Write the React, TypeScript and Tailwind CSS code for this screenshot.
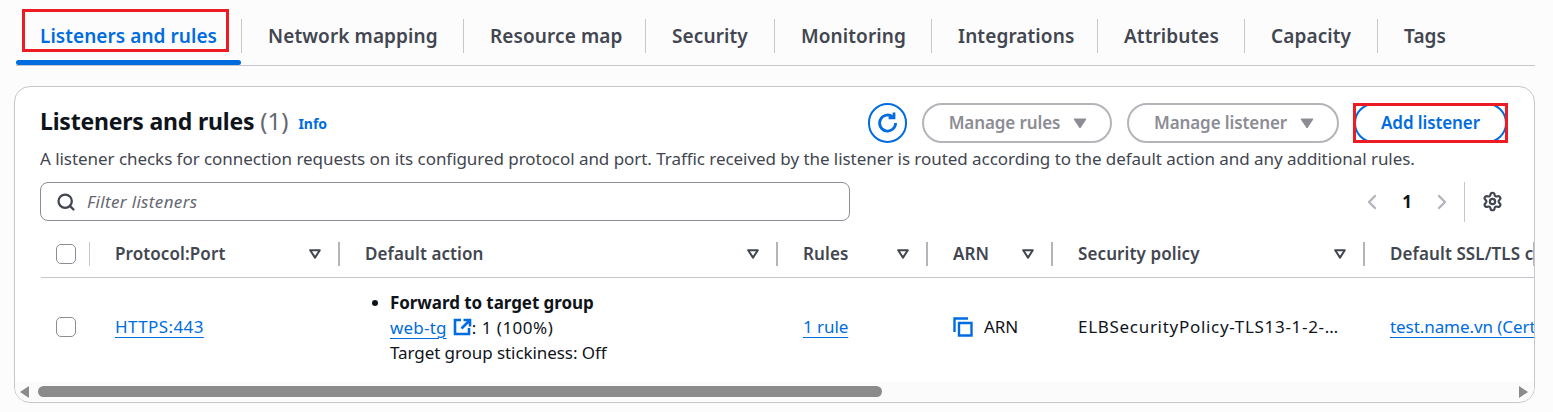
import React from "react";
import { ChevronLeft, ChevronRight, Search, Settings } from "lucide-react";

const tabs = ["Network mapping", "Resource map", "Security", "Monitoring", "Integrations", "Attributes", "Capacity", "Tags"];
const tabWidths = ["w-[223px]", "w-[182px]", "w-[129px]", "w-[157px]", "w-[166px]", "w-[147px]", "w-[133px]", "w-[96px]"];

const FilterCaret = () => (
  <svg width="12" height="10" viewBox="0 0 12 10" className="shrink-0">
    <path d="M1.2 1.2h9.6L6 8.6z" fill="none" stroke="#424650" strokeWidth="2" strokeLinejoin="round" />
  </svg>
);

const SolidCaret = ({ color }: { color: string }) => (
  <svg width="14" height="11" viewBox="0 0 14 11" className="shrink-0">
    <path d="M1 1h12L7 10z" fill={color} stroke={color} strokeLinejoin="round" />
  </svg>
);

const Checkbox = () => <div className="w-5 h-5 shrink-0 rounded-[5px] border border-[#8c8c94] bg-white" />;

const HeaderCell = ({ label, width, last }: { label: string; width: string; last?: boolean }) => (
  <div className={`${width} shrink-0 h-6 flex items-center justify-between pl-[25px] border-r-2 border-[#b4b4bb] ${last ? "border-r-0" : ""}`}>
    <span className="text-[17px] font-semibold tracking-[0.1px] whitespace-nowrap text-[#424650]">{label}</span>
    {!last && <span className="pr-[17px] flex"><FilterCaret /></span>}
  </div>
);

const App = () => {
  return (
    <div className="relative w-[1553px] h-[412px] overflow-hidden bg-[#fcfcfc] pt-[15px] font-['Noto_Sans','Open_Sans',sans-serif] text-[#0f141a]">
      {/* Tabs */}
      <div className="ml-4 w-[1519px] h-[51px] flex border-b border-[#c6c6cd]">
        <div className="relative w-[225px] h-[50px] pt-2 shrink-0">
          <div className="h-[26px] pl-6 text-[19px] leading-[26px] tracking-[0.05px] font-semibold text-[#006ce0] whitespace-nowrap">Listeners and rules</div>
          <div className="absolute left-0 bottom-0 w-[225px] h-[5px] rounded-[3px] bg-[#006ce0]" />
          <div className="absolute left-[6px] top-[-6px] w-[207px] h-[43px] border-[3px] border-[#ed1c24]" />
        </div>
        {tabs.map((t, i) => (
          <div key={t} className={`${tabWidths[i]} h-[34px] mt-[4px] pl-[26px] shrink-0 flex items-center text-[19px] tracking-[0.1px] font-semibold text-[#424650] whitespace-nowrap ${i === 0 ? "border-l border-[#c6c6cd]" : ""} ${i < tabs.length - 1 ? "border-r border-[#c6c6cd]" : ""}`}>
            {t}
          </div>
        ))}
      </div>

      {/* Card */}
      <div className="relative ml-[14px] mt-5 w-[1521px] h-[317px] rounded-2xl border border-[#c6c6cd] bg-white overflow-hidden">
        <div className="pl-[25px] pr-[26px] pt-4">
          <div className="flex items-center h-10">
            <span className="-mt-1 text-[23px] font-bold tracking-[-0.2px] whitespace-nowrap">Listeners and rules</span>
            <span className="-mt-1 ml-[6px] text-[24px] text-[#656871]">(1)</span>
            <span className="ml-[10px] text-[14px] tracking-[-0.05px] font-bold text-[#006ce0]">Info</span>
            <div className="ml-auto mr-px flex items-center gap-[15px]">
              <div className="w-[39px] h-10 rounded-full border-2 border-[#006ce0] flex items-center justify-center">
                <svg width="26" height="26" viewBox="0 0 26 26" fill="none" stroke="#006ce0" strokeWidth="2.8">
                  <path d="M20.6 13a8 8 0 1 1-3-6.2" />
                  <path d="M19 2.4v5.4h-5.4" />
                </svg>
              </div>
              <div className="w-[190px] h-10 pl-[2px] rounded-[20px] border-2 border-[#b4b4bb] flex items-center justify-center gap-[13px] text-[17px] tracking-[-0.1px] font-semibold text-[#8c8c94]">
                Manage rules <SolidCaret color="#8c8c94" />
              </div>
              <div className="w-[212px] h-10 pl-[2px] rounded-[20px] border-2 border-[#b4b4bb] flex items-center justify-center gap-[13px] text-[17px] tracking-[-0.1px] font-semibold text-[#8c8c94]">
                Manage listener <SolidCaret color="#8c8c94" />
              </div>
              <div className="relative w-[153px] h-10 rounded-[20px] border-2 border-[#006ce0] flex items-center justify-center text-[17px] tracking-[-0.1px] font-semibold text-[#006ce0]">
                Add listener
                <div className="absolute -left-[3px] -top-[2px] w-[155px] h-[40px] border-[3px] border-[#ed1c24]" />
              </div>
            </div>
          </div>
          <p className="mt-[5px] h-[22px] text-[17px] leading-[22px] tracking-[-0.05px] whitespace-nowrap text-[#424650]">
            A listener checks for connection requests on its configured protocol and port. Traffic received by the listener is routed according to the default action and any additional rules.
          </p>
          <div className="mt-[12px] flex items-center h-[39px]">
            <div className="w-[810px] h-[39px] rounded-lg border border-[#8c8c94] flex items-center pl-[15px] gap-[11px] bg-white">
              <Search size={20} strokeWidth={2.7} className="text-[#424650]" />
              <span className="text-[17px] italic tracking-[0.35px] text-[#656871]">Filter listeners</span>
            </div>
            <div className="ml-auto flex items-center">
              <ChevronLeft size={24} strokeWidth={2.4} className="text-[#b4b4bb]" />
              <span className="w-[46px] text-center text-[17px] font-bold">1</span>
              <ChevronRight size={24} strokeWidth={2.4} className="text-[#b4b4bb]" />
              <div className="ml-[10px] h-10 border-l border-[#c6c6cd]" />
              <Settings size={21} strokeWidth={2.5} className="ml-[17px] mr-[5px] text-[#424650]" />
            </div>
          </div>
        </div>

        {/* Table */}
        <div className="mt-[10px] ml-[26px] h-[47px] flex items-center border-b border-[#c6c6cd] w-[1494px] overflow-hidden">
          <div className="w-[49px] pl-[15px] shrink-0 h-6 flex items-center border-r border-[#c6c6cd]">
            <Checkbox />
          </div>
          <HeaderCell label="Protocol:Port" width="w-[250px]" />
          <HeaderCell label="Default action" width="w-[438px]" />
          <HeaderCell label="Rules" width="w-[150px]" />
          <HeaderCell label="ARN" width="w-[125px]" />
          <HeaderCell label="Security policy" width="w-[312px]" />
          <HeaderCell label="Default SSL/TLS certificate" width="w-[170px]" last />
        </div>
        <div className="ml-[26px] h-[104px] pb-[6px] flex items-center w-[1494px] overflow-hidden text-[17px] tracking-[-0.07px] whitespace-nowrap">
          <div className="w-[49px] pl-[15px] shrink-0"><Checkbox /></div>
          <div className="w-[250px] pl-[25px] shrink-0 text-[#006ce0] tracking-[0.4px]">
            <span className="underline underline-offset-[4px] decoration-1">HTTPS:443</span>
          </div>
          <div className="w-[438px] pl-[50px] shrink-0 leading-[25px]">
            <div className="font-bold relative">
              <span className="absolute left-[-18px] top-[10px] w-[6px] h-[6px] rounded-full bg-[#0f141a]" />
              Forward to target group
            </div>
            <div className="flex items-center">
              <span className="pr-[5px] tracking-[0.2px] text-[#006ce0] underline underline-offset-[4px] decoration-1">web-tg</span>
              <svg width="19" height="18" viewBox="0 0 19 18" fill="none" stroke="#006ce0" strokeWidth="2.6" className="ml-px">
                <path d="M8 2H2v14h14v-6" />
                <path d="M10.5 2H17v6.5M16.5 2.5L8.5 10.5" />
              </svg>
              <span className="tracking-[0.5px]">: 1 (100%)</span>
            </div>
            <div>Target group stickiness: Off</div>
          </div>
          <div className="w-[150px] pl-[25px] shrink-0 text-[#006ce0]">
            <span className="underline underline-offset-[4px] decoration-1">1 rule</span>
          </div>
          <div className="w-[125px] pl-[25px] shrink-0 flex items-center gap-[11px]">
            <svg width="20" height="20" viewBox="0 0 20 20" fill="none" stroke="#006ce0" strokeWidth="2.4">
              <path d="M15 1.5H1.5V15" />
              <path d="M6 6h12.5v12.5H6z" />
            </svg>
            <span>ARN</span>
          </div>
          <div className="w-[312px] pl-[25px] shrink-0 tracking-[0.7px]">ELBSecurityPolicy-TLS13-1-2-…</div>
          <div className="w-[170px] pl-[25px] shrink-0 text-[#006ce0] overflow-hidden">
            <span className="underline underline-offset-[4px] decoration-1">test.name.vn (Certificate)</span>
          </div>
        </div>

        {/* Scrollbar */}
        <div className="h-[19px] bg-[#fbfbfb] flex items-center pl-[5px] pr-[6px] gap-[9px]">
          <div className="w-0 h-0 border-y-[6px] border-y-transparent border-r-[9px] border-r-[#8b8b8b]" />
          <div className="w-[844px] h-[11px] rounded-md bg-[#8b8b8b]" />
          <div className="ml-auto w-0 h-0 border-y-[6px] border-y-transparent border-l-[9px] border-l-[#8b8b8b]" />
        </div>
      </div>
    </div>
  );
};

export default App;
